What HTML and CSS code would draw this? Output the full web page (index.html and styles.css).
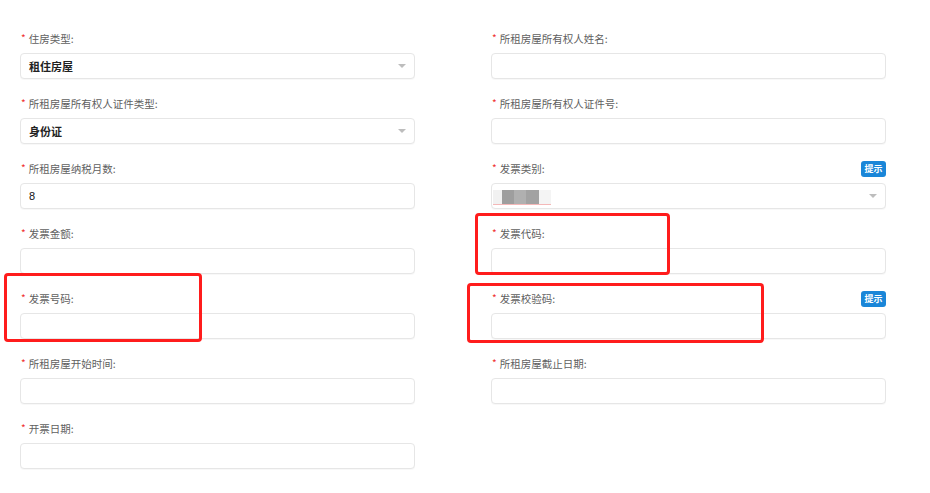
FILE: index.html
```html
<!DOCTYPE html>
<html lang="zh">
<head>
<meta charset="utf-8">
<link rel="stylesheet" href="styles.css">
</head>
<body>
<div class="page">
  <div class="form">
    <div class="field">
      <div class="label-row"><span class="label"><i class="req">*</i>住房类型:</span></div>
      <div class="input select"><span class="value">租住房屋</span><span class="arrow"></span></div>
    </div>
    <div class="field">
      <div class="label-row"><span class="label"><i class="req">*</i>所租房屋所有权人姓名:</span></div>
      <div class="input"></div>
    </div>
    <div class="field">
      <div class="label-row"><span class="label"><i class="req">*</i>所租房屋所有权人证件类型:</span></div>
      <div class="input select"><span class="value">身份证</span><span class="arrow"></span></div>
    </div>
    <div class="field">
      <div class="label-row"><span class="label"><i class="req">*</i>所租房屋所有权人证件号:</span></div>
      <div class="input"></div>
    </div>
    <div class="field">
      <div class="label-row"><span class="label"><i class="req">*</i>所租房屋纳税月数:</span></div>
      <div class="input"><span class="value num">8</span></div>
    </div>
    <div class="field">
      <div class="label-row"><span class="label"><i class="req">*</i>发票类别:</span><span class="tip">提示</span></div>
      <div class="input select blurred">
        <span class="blur">
          <span class="b b0"></span><span class="b b1"></span><span class="b b2"></span><span class="b b3"></span><span class="b b4"></span>
        </span>
        <span class="arrow"></span>
      </div>
    </div>
    <div class="field">
      <div class="label-row"><span class="label"><i class="req">*</i>发票金额:</span></div>
      <div class="input"></div>
    </div>
    <div class="field">
      <div class="label-row"><span class="label"><i class="req">*</i>发票代码:</span></div>
      <div class="input"></div>
    </div>
    <div class="field">
      <div class="label-row"><span class="label"><i class="req">*</i>发票号码:</span></div>
      <div class="input"></div>
    </div>
    <div class="field">
      <div class="label-row"><span class="label"><i class="req">*</i>发票校验码:</span><span class="tip">提示</span></div>
      <div class="input"></div>
    </div>
    <div class="field">
      <div class="label-row"><span class="label"><i class="req">*</i>所租房屋开始时间:</span></div>
      <div class="input"></div>
    </div>
    <div class="field">
      <div class="label-row"><span class="label"><i class="req">*</i>所租房屋截止日期:</span></div>
      <div class="input"></div>
    </div>
    <div class="field">
      <div class="label-row"><span class="label"><i class="req">*</i>开票日期:</span></div>
      <div class="input"></div>
    </div>
  </div>
  <div class="mark mark-a"></div>
  <div class="mark mark-b"></div>
  <div class="mark mark-c"></div>
</div>
</body>
</html>
```

FILE: styles.css
```css
html, body {
  margin: 0;
  padding: 0;
  background: #fff;
}
.page {
  position: relative;
  width: 930px;
  height: 493px;
  overflow: hidden;
  font-family: "Noto Sans CJK SC", "Liberation Sans", sans-serif;
}
.form {
  display: grid;
  grid-template-columns: 395px 395px;
  column-gap: 76px;
  row-gap: 18px;
  padding: 32px 0 0 20px;
}
.field {
  display: flex;
  flex-direction: column;
}
.label-row {
  height: 14px;
  margin-bottom: 7px;
  display: flex;
  align-items: center;
  justify-content: space-between;
}
.label {
  font-size: 10.5px;
  line-height: 14px;
  color: #5f5f5f;
  padding-left: 1px;
  white-space: nowrap;
}
.req {
  font-style: normal;
  color: #f03030;
  font-size: 10px;
  margin-right: 3px;
  position: relative;
  top: -1px;
}
.tip {
  height: 16px;
  width: 25px;
  border-radius: 3px;
  background: #1a86d8;
  color: #fff;
  font-size: 9px;
  line-height: 16px;
  text-align: center;
  font-weight: bold;
}
.input {
  height: 26px;
  box-sizing: border-box;
  border: 1px solid #e6e6e6;
  border-radius: 4px;
  display: flex;
  align-items: center;
  padding: 0 8px;
  background: #fff;
  box-shadow: 0 1px 1px rgba(0, 0, 0, 0.03);
}
.value {
  font-size: 11px;
  font-weight: bold;
  color: #222;
  flex: 1;
}
.value.num {
  font-family: "Liberation Sans", sans-serif;
  font-weight: normal;
  color: #111;
}
.arrow {
  width: 0;
  height: 0;
  border-left: 4px solid transparent;
  border-right: 4px solid transparent;
  border-top: 4px solid #bdbdbd;
  margin-left: auto;
}
.input.blurred {
  padding-left: 1px;
}
.blur {
  display: flex;
  height: 14px;
  align-items: stretch;
  border-bottom: 1px solid #f4b8b8;
  margin-top: 2px;
}
.b { display: block; }
.b0 { width: 9px; background: #f1f1f1; }
.b1 { width: 12px; background: #9e9e9e; }
.b2 { width: 12px; background: #b0b0b0; }
.b3 { width: 13px; background: #a2a2a2; }
.b4 { width: 12px; background: #f4f4f4; }
.mark {
  position: absolute;
  border: 3px solid #ff1c1c;
  border-radius: 4px;
  box-sizing: border-box;
}
.mark-a { left: 4px; top: 273px; width: 198px; height: 69px; }
.mark-b { left: 475px; top: 213px; width: 195px; height: 62px; }
.mark-c { left: 467px; top: 283px; width: 297px; height: 60px; }
```
